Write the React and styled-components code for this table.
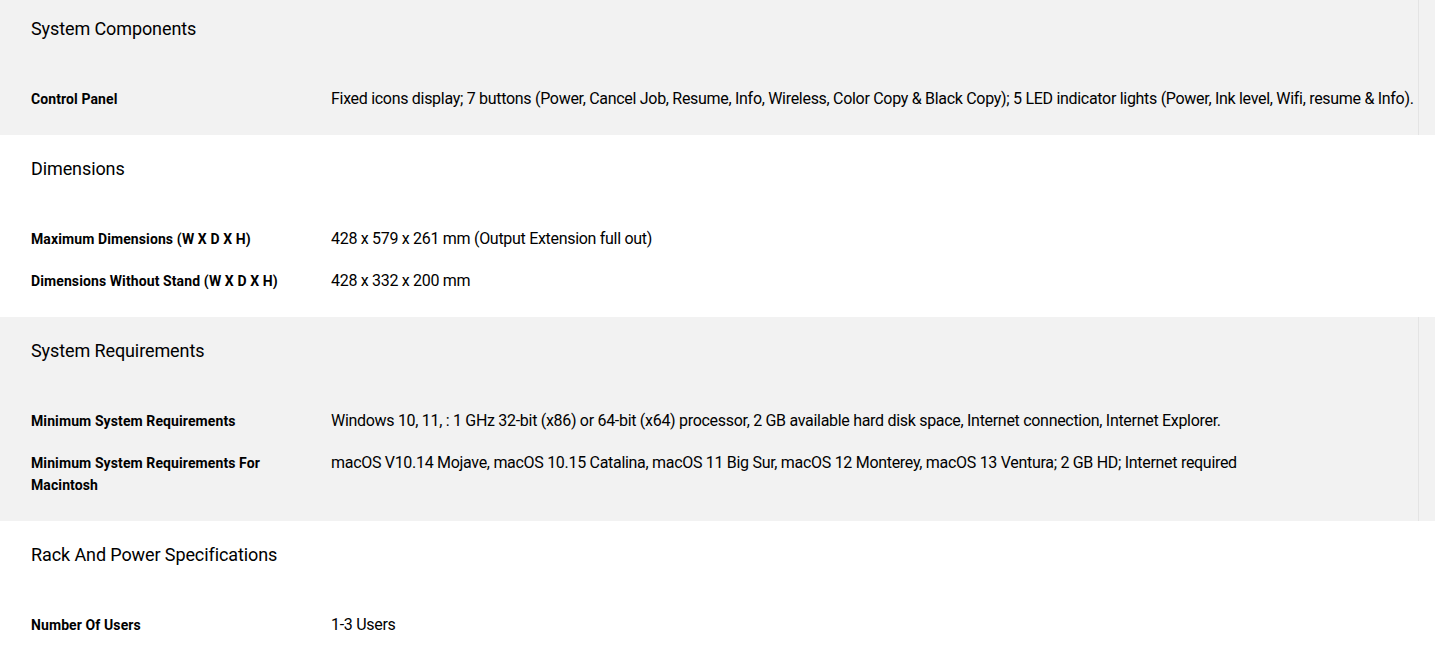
import React from "react";
import styled, { createGlobalStyle } from "styled-components";

const Global = createGlobalStyle`
  html, body { margin: 0; padding: 0; background: #fff; }
  body { font-family: Roboto, "Liberation Sans", sans-serif; color: #000; overflow: hidden; }
`;

const Page = styled.div`
  margin-top: -5px;
`;

const Section = styled.section`
  background: ${(p) => (p.$gray ? "#f2f2f2" : "#ffffff")};
  padding-right: 16px;
`;

const Inner = styled.div`
  padding-bottom: 15px;
  border-right: 1px solid ${(p) => (p.$gray ? "#e4e4e4" : "transparent")};
`;

const Title = styled.h2`
  margin: 0;
  padding: 20px 0 35px 31px;
  font-size: 18px;
  line-height: 28px;
  font-weight: 400;
  letter-spacing: -0.1px;
`;

const Row = styled.div`
  display: grid;
  grid-template-columns: 300px 1fr;
  padding: 10px 0 10px 31px;
  font-size: 16px;
  line-height: 22px;
`;

const Label = styled.div`
  font-weight: 700;
  font-size: 14px;
  padding-right: 30px;
  letter-spacing: 0.1px;
`;

const Value = styled.div`
  letter-spacing: -0.3px;
`;

const data = [
  {
    title: "System Components",
    rows: [
      [
        "Control Panel",
        "Fixed icons display; 7 buttons (Power, Cancel Job, Resume, Info, Wireless, Color Copy & Black Copy); 5 LED indicator lights (Power, Ink level, Wifi, resume & Info).",
      ],
    ],
  },
  {
    title: "Dimensions",
    rows: [
      ["Maximum Dimensions (W X D X H)", "428 x 579 x 261 mm (Output Extension full out)"],
      ["Dimensions Without Stand (W X D X H)", "428 x 332 x 200 mm"],
    ],
  },
  {
    title: "System Requirements",
    rows: [
      [
        "Minimum System Requirements",
        "Windows 10, 11, : 1 GHz 32-bit (x86) or 64-bit (x64) processor, 2 GB available hard disk space, Internet connection, Internet Explorer.",
      ],
      [
        "Minimum System Requirements For Macintosh",
        "macOS V10.14 Mojave, macOS 10.15 Catalina, macOS 11 Big Sur, macOS 12 Monterey, macOS 13 Ventura; 2 GB HD; Internet required",
      ],
    ],
  },
  {
    title: "Rack And Power Specifications",
    rows: [["Number Of Users", "1-3 Users"]],
  },
];

export default function App() {
  return (
    <>
      <Global />
      <Page>
        {data.map((s, i) => (
          <Section key={s.title} $gray={i % 2 === 0}>
            <Inner $gray={i % 2 === 0}>
              <Title>{s.title}</Title>
              {s.rows.map(([l, v]) => (
                <Row key={l}>
                  <Label>{l}</Label>
                  <Value>{v}</Value>
                </Row>
              ))}
            </Inner>
          </Section>
        ))}
      </Page>
    </>
  );
}
